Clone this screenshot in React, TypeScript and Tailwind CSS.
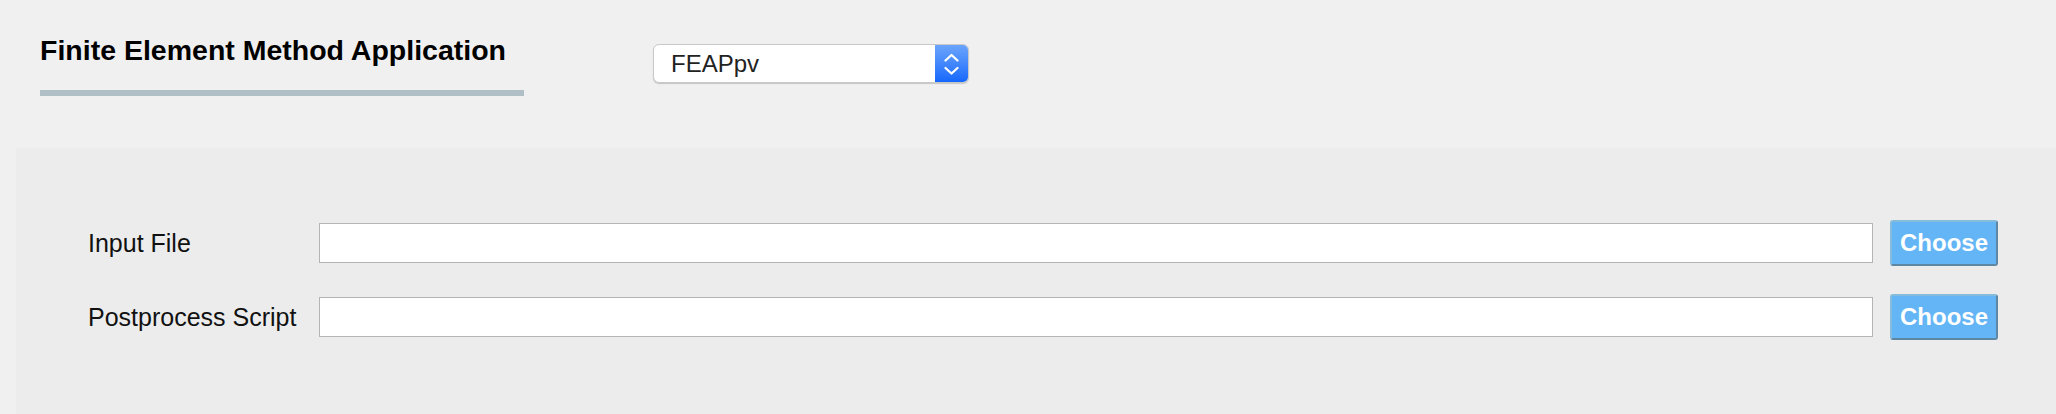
const FIELDS = ["Input File", "Postprocess Script"];

function FileRow({ label }: { label: string }) {
  return (
    <div className="flex h-[46px] items-center">
      <label className="w-[231px] shrink-0 text-[25px] leading-[30px] text-[#111]">
        {label}
      </label>
      <input
        type="text"
        className="h-[40px] flex-1 border border-[#b4b4b4] bg-white px-2 text-[22px] outline-none"
      />
      <button
        type="button"
        className="ml-[17px] flex h-[46px] w-[108px] shrink-0 items-center justify-center rounded-[3px]
                   border-2 border-t-[#85bcdc] border-l-[#85bcdc] border-r-[#5d87a2] border-b-[#5d87a2]
                   bg-[#64b5f6] text-[24px] font-bold leading-none text-white"
      >
        Choose
      </button>
    </div>
  );
}

// macOS-style up/down stepper arrows
function Stepper() {
  return (
    <svg width="33" height="37" viewBox="0 0 33 37" fill="none" aria-hidden>
      <path
        d="M10.5 15.5 L16.5 10 L22.5 15.5"
        stroke="white"
        strokeWidth="2.3"
        strokeLinecap="round"
        strokeLinejoin="round"
      />
      <path
        d="M10.5 23 L16.5 28.5 L22.5 23"
        stroke="white"
        strokeWidth="2.3"
        strokeLinecap="round"
        strokeLinejoin="round"
      />
    </svg>
  );
}

export default function App() {
  return (
    <div className="h-[414px] w-full overflow-hidden bg-[#f0f0f0] font-['Liberation_Sans',Arial,sans-serif]">
      {/* header */}
      <div className="flex items-start pl-[40px] pt-[34px]">
        <div className="w-[484px]">
          <h1 className="text-[28.5px] font-bold leading-[32px] text-black">
            Finite Element Method Application
          </h1>
          <div className="mt-[24px] h-[6px] bg-[#b0bec5]" />
        </div>

        <div
          className="ml-[129px] mt-[10px] flex h-[39px] w-[316px] overflow-hidden rounded-[6px]
                     border border-[#c8c8c8] bg-white shadow-[0_1px_1px_rgba(0,0,0,0.18)]"
        >
          <div className="flex flex-1 items-center pl-[17px] pt-[1px] text-[24px] text-[#222]">
            FEAPpv
          </div>
          <div className="flex w-[33px] items-center justify-center bg-gradient-to-b from-[#6aa4fb] to-[#1467fc]">
            <Stepper />
          </div>
        </div>
      </div>

      {/* form panel */}
      <div className="ml-[16px] mt-[52px] flex h-[266px] flex-col gap-[28px] bg-[#ececec] pl-[72px] pr-[58px] pt-[72px]">
        {FIELDS.map((f) => (
          <FileRow key={f} label={f} />
        ))}
      </div>
    </div>
  );
}
